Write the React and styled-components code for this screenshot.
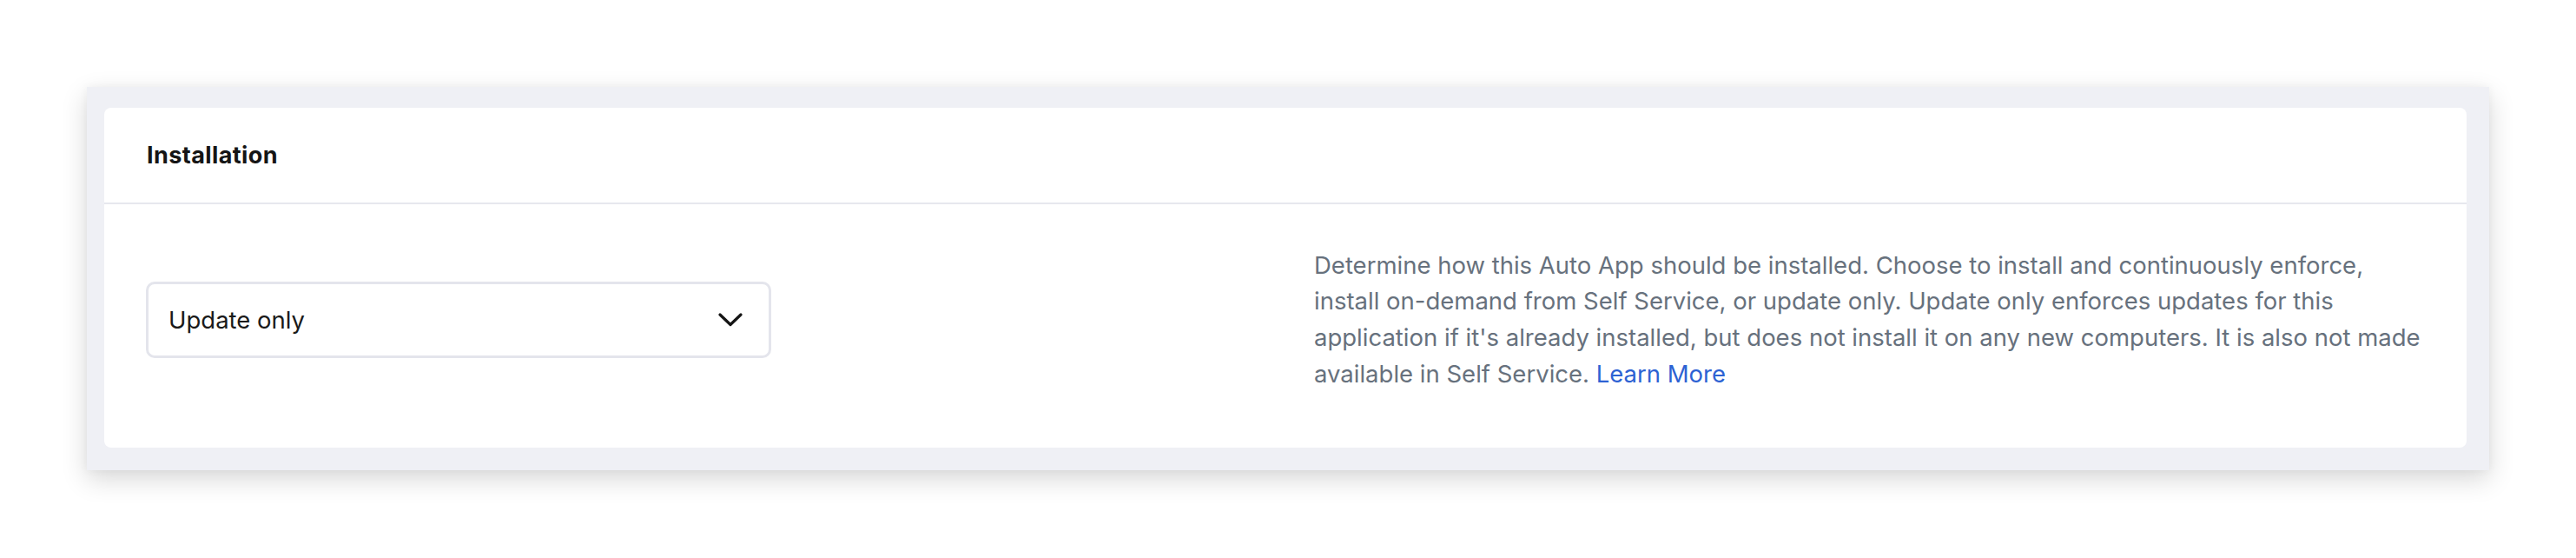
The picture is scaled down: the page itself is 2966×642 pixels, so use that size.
import React from 'react';
import styled, { createGlobalStyle } from 'styled-components';

const GlobalStyle = createGlobalStyle`
  html, body {
    margin: 0;
    padding: 0;
    background: #ffffff;
  }
  * {
    box-sizing: border-box;
  }
`;

const Page = styled.div`
  padding: 100px;
  font-family: Inter, 'Liberation Sans', sans-serif;
`;

const Panel = styled.section`
  background: #eff0f5;
  padding: 24px 26px 26px 20px;
  box-shadow: 0 10px 28px rgba(0, 0, 0, 0.16), 0 0 10px rgba(0, 0, 0, 0.04);
`;

const Card = styled.div`
  background: #ffffff;
  border-radius: 8px;
`;

const CardHeader = styled.div`
  height: 111px;
  display: flex;
  align-items: center;
  padding: 0 49px;
  border-bottom: 2px solid #e7e8ee;
`;

const Title = styled.h2`
  margin: 0;
  font-size: 27px;
  font-weight: 700;
  color: #151515;
  letter-spacing: 0.4px;
`;

const CardBody = styled.div`
  height: 280px;
  display: grid;
  grid-template-columns: 720px 1fr;
  column-gap: 625px;
  align-items: center;
  padding: 0 48px 14px;
`;

const Select = styled.div`
  height: 88px;
  display: flex;
  align-items: center;
  justify-content: space-between;
  padding: 0 30px 0 23px;
  border: 3.5px solid #e4e5ec;
  border-radius: 10px;
  font-size: 27.5px;
  color: #1a1a1a;
`;

const Chevron = () => (
  <svg width="28" height="16" viewBox="0 0 28 16" fill="none">
    <path d="M2 2 L14 13.5 L26 2" stroke="#151515" strokeWidth="3.2" strokeLinecap="round" strokeLinejoin="round" />
  </svg>
);

const Description = styled.p`
  margin: 0;
  max-width: 1285px;
  font-size: 27.5px;
  line-height: 41.7px;
  color: #67717d;
`;

const Link = styled.a`
  color: #2d62d3;
  text-decoration: none;
`;

const App = () => {
  return (
    <Page>
      <GlobalStyle />
      <Panel>
        <Card>
          <CardHeader>
            <Title>Installation</Title>
          </CardHeader>
          <CardBody>
            <Select>
              <span>Update only</span>
              <Chevron />
            </Select>
            <Description>
              Determine how this Auto App should be installed. Choose to install and continuously enforce,
              install on-demand from Self Service, or update only. Update only enforces updates for this
              application if it's already installed, but does not install it on any new computers. It is also not made
              available in Self Service. <Link>Learn More</Link>
            </Description>
          </CardBody>
        </Card>
      </Panel>
    </Page>
  );
};

export default App;
